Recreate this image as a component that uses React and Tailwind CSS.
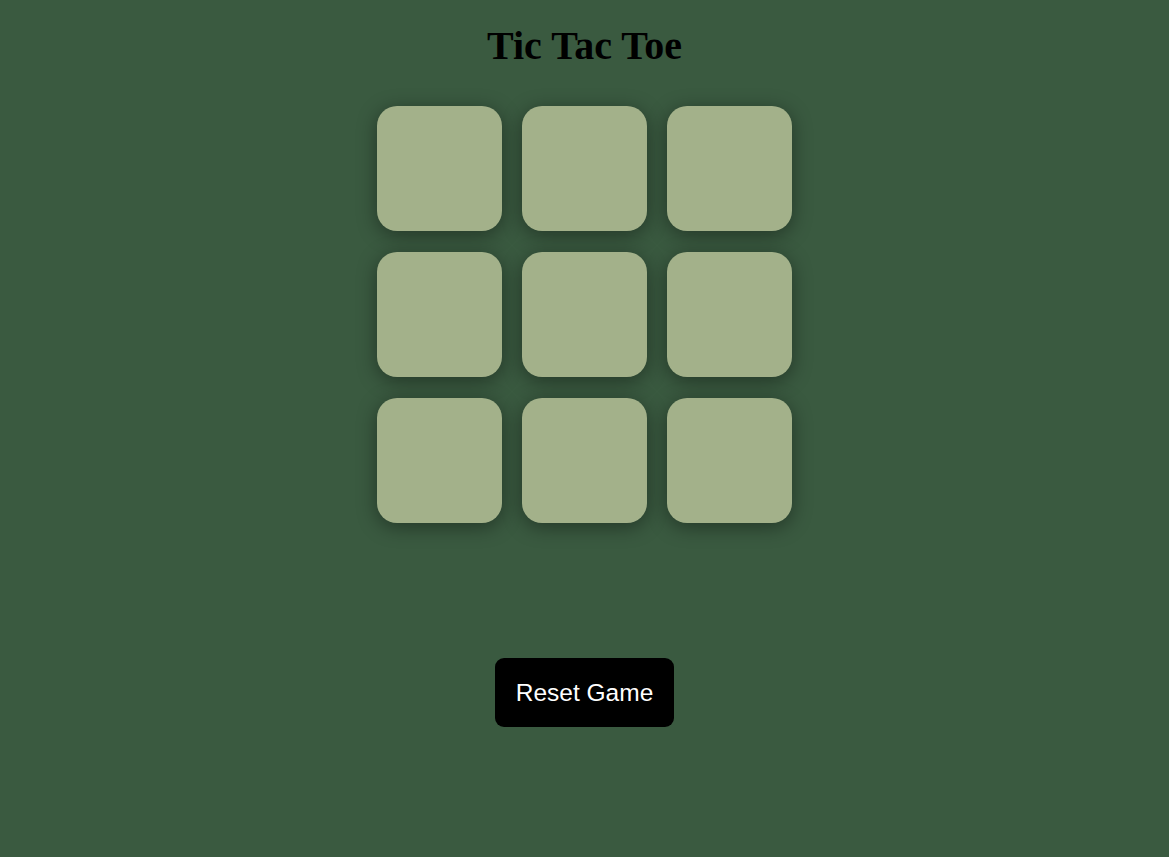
import React, { useState } from 'react'

export default function App() {
  const [board, setBoard] = useState(Array(9).fill(null))
  const [xNext, setXNext] = useState(true)

  const play = (i) => {
    if (board[i]) return
    const next = board.slice()
    next[i] = xNext ? 'X' : 'O'
    setBoard(next)
    setXNext(!xNext)
  }

  const reset = () => {
    setBoard(Array(9).fill(null))
    setXNext(true)
  }

  return (
    <div className="min-h-[857px] bg-[#3a5a40] flex flex-col items-center font-['Liberation_Sans',Arial,sans-serif]">
      <h1 className="mt-[24px] text-[40px] leading-[44px] font-bold text-black font-['Liberation_Serif','Times_New_Roman',serif]">
        Tic Tac Toe
      </h1>
      <div className="mt-[38px] grid grid-cols-[repeat(3,125px)] gap-x-[20px] gap-y-[21px]">
        {board.map((v, i) => (
          <button
            key={i}
            onClick={() => play(i)}
            className="w-[125px] h-[125px] rounded-[20px] bg-[#a3b18a] shadow-[0_4px_20px_rgba(0,0,0,0.4)] text-5xl font-bold text-[#344e41]"
          >
            {v}
          </button>
        ))}
      </div>
      <button
        onClick={reset}
        className="mt-[135px] bg-black text-white rounded-[9px] px-[21px] py-[21px] text-[24.5px] leading-[27px]"
      >
        Reset Game
      </button>
    </div>
  )
}
